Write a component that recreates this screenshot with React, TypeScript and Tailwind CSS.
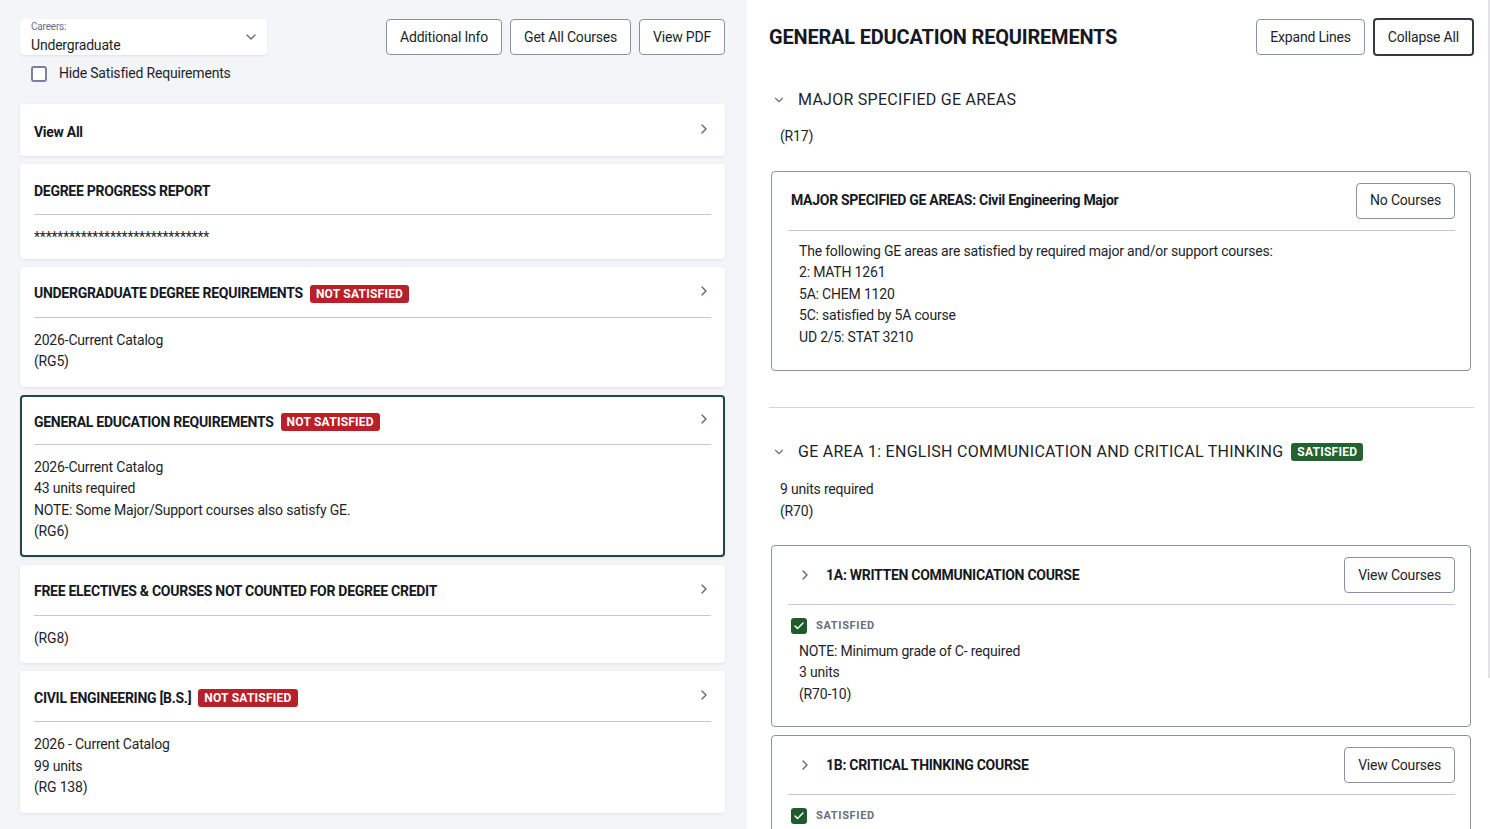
import { ChevronDown, ChevronRight, Check } from "lucide-react"
import type { ReactNode } from "react"

const FONT = { fontFamily: "Roboto, 'Noto Sans', sans-serif" }

function Badge({ tone, children }: { tone: "red" | "green"; children: ReactNode }) {
  return (
    <span
      className={`inline-flex items-center h-[18px] px-[6px] rounded-[3px] text-[12px] font-bold tracking-[0.02em] text-white uppercase ${
        tone === "red" ? "bg-[#b8202a]" : "bg-[#24622f]"
      }`}
    >
      {children}
    </span>
  )
}

function OutlineButton({ children, strong }: { children: ReactNode; strong?: boolean }) {
  return (
    <button
      className={`px-[13px] rounded-[4px] bg-white text-[14px] text-[#1d1f2b] whitespace-nowrap ${
        strong ? "border-2 border-[#2f3d3c] h-[38px] px-[12px]" : "border border-[#8a90a8] h-[36px]"
      }`}
    >
      {children}
    </button>
  )
}

interface Summary {
  title: string
  badge?: boolean
  lines?: string[]
  chevron?: boolean
  selected?: boolean
  tight?: boolean
}

const SUMMARIES: Summary[] = [
  { title: "View All", chevron: true },
  { title: "DEGREE PROGRESS REPORT", lines: ["******************************"], tight: true },
  { title: "UNDERGRADUATE DEGREE REQUIREMENTS", badge: true, chevron: true, lines: ["2026-Current Catalog", "(RG5)"] },
  {
    title: "GENERAL EDUCATION REQUIREMENTS",
    badge: true,
    chevron: true,
    selected: true,
    lines: ["2026-Current Catalog", "43 units required", "NOTE: Some Major/Support courses also satisfy GE.", "(RG6)"],
  },
  { title: "FREE ELECTIVES & COURSES NOT COUNTED FOR DEGREE CREDIT", chevron: true, lines: ["(RG8)"] },
  { title: "CIVIL ENGINEERING [B.S.]", badge: true, chevron: true, lines: ["2026 - Current Catalog", "99 units", "(RG 138)"] },
]

function SummaryCard({ item }: { item: Summary }) {
  const pad = item.selected ? "pb-[12px]" : item.tight ? "pb-[10px]" : "pb-[14px]"
  const height = item.selected ? "h-[48px]" : item.lines ? "h-[51px]" : "h-[52px]"
  return (
    <div
      className={`bg-white rounded-[4px] shadow-[0_1px_3px_rgba(60,70,110,0.10)] ${
        item.selected ? "border-2 border-[#1f4a37] px-[12px]" : "px-[14px]"
      }`}
    >
      <div className={`flex items-center pt-[4px] ${height} ${item.lines ? "border-b border-[#c4c7d6]" : ""}`}>
        <span className="text-[14px] font-bold text-[#161822] tracking-[-0.02em]">{item.title}</span>
        {item.badge && (
          <span className="ml-[7px] flex">
            <Badge tone="red">Not Satisfied</Badge>
          </span>
        )}
        {item.chevron && (
          <ChevronRight size={16} strokeWidth={2} className="ml-auto mr-[-1px] text-[#5e6483] -translate-y-[3px]" />
        )}
      </div>
      {item.lines && (
        <div className={`pt-[12px] ${pad} text-[14px] leading-[21.5px] text-[#1d1f2b]`}>
          {item.lines.map((l) => (
            <div key={l}>{l}</div>
          ))}
        </div>
      )}
    </div>
  )
}

function SatisfiedMark() {
  return (
    <div className="flex items-center gap-[9px]">
      <span className="w-[16px] h-[16px] rounded-[3px] bg-[#1f5a2d] flex items-center justify-center">
        <Check size={12} strokeWidth={3} className="text-white" />
      </span>
      <span className="text-[11px] font-bold tracking-[0.06em] text-[#6a6e7e]">SATISFIED</span>
    </div>
  )
}

function RuleCard({
  title,
  children,
  button,
  expandable,
}: {
  title: string
  children: ReactNode
  button: string
  expandable?: boolean
}) {
  return (
    <div className="ml-[2px] mr-[3px] border border-[#8a90a8] rounded-[4px] pl-4 pr-[15px]">
      <div className="flex items-center py-[11px] border-b border-[#c4c7d6]">
        {expandable && <ChevronRight size={16} strokeWidth={2} className="ml-[9px] mr-[13px] text-[#5e6483]" />}
        <span className={`text-[14px] font-bold text-[#161822] tracking-[-0.02em] ${expandable ? "" : "pl-[3px]"}`}>
          {title}
        </span>
        <span className="ml-auto">
          <OutlineButton>{button}</OutlineButton>
        </span>
      </div>
      {children}
    </div>
  )
}

function SectionHeading({ children }: { children: ReactNode }) {
  return (
    <div className="flex items-center h-[24px]">
      <ChevronDown size={14} strokeWidth={2} className="ml-[3px] mr-[12px] text-[#6a7090]" />
      {children}
    </div>
  )
}

export default function App() {
  return (
    <div
      className="relative flex h-[829px] w-[1490px] overflow-hidden bg-white text-[#1d1f2b] tracking-[-0.012em]"
      style={FONT}
    >
      {/* left: requirement summary list */}
      <div className="w-[747px] shrink-0 bg-[#f4f5f9] pl-5 pr-[22px] pt-[19px]">
        <div className="flex items-start justify-between">
          <div className="w-[247px] h-[36px] bg-white rounded-[4px] shadow-[0_1px_2px_rgba(60,70,110,0.10)] pl-[11px] pr-[8px] flex items-center">
            <div className="flex-1 leading-none">
              <div className="text-[10px] text-[#6a6e85]">Careers:</div>
              <div className="text-[14px] text-[#1d1f2b] mt-[6px]">Undergraduate</div>
            </div>
            <ChevronDown size={16} strokeWidth={2} className="text-[#6a6e7e]" />
          </div>
          <div className="flex gap-2">
            <OutlineButton>Additional Info</OutlineButton>
            <OutlineButton>Get All Courses</OutlineButton>
            <OutlineButton>View PDF</OutlineButton>
          </div>
        </div>

        <label className="flex items-center gap-[12px] mt-[8px] ml-[11px]">
          <span className="w-[16px] h-[16px] rounded-[3px] border-2 border-[#7b80a0] bg-white" />
          <span className="text-[14px] text-[#1d1f2b]">Hide Satisfied Requirements</span>
        </label>

        <div className="mt-[20px] flex flex-col gap-2">
          {SUMMARIES.map((s) => (
            <SummaryCard key={s.title} item={s} />
          ))}
        </div>
      </div>

      {/* right: selected requirement detail */}
      <div className="flex-1 pl-[22px] pr-4 pt-[18px]">
        <div className="flex items-center justify-between h-[38px]">
          <h1 className="text-[20px] font-bold text-[#161822] tracking-[-0.01em]">GENERAL EDUCATION REQUIREMENTS</h1>
          <div className="flex gap-2 items-center">
            <OutlineButton>Expand Lines</OutlineButton>
            <OutlineButton strong>Collapse All</OutlineButton>
          </div>
        </div>

        <div className="mt-[32px]">
          <SectionHeading>
            <span className="text-[16px] text-[#1d1f2b] tracking-[0.017em]">MAJOR SPECIFIED GE AREAS</span>
          </SectionHeading>
        </div>
        <div className="mt-[14px] pl-[11px] text-[14px] leading-[21.5px]">(R17)</div>

        <div className="mt-[23px]">
          <RuleCard title="MAJOR SPECIFIED GE AREAS: Civil Engineering Major" button="No Courses">
            <div className="pl-[11px] pt-[10px] pb-[22px] text-[14px] leading-[21.5px]">
              <div>The following GE areas are satisfied by required major and/or support courses:</div>
              <div>2: MATH 1261</div>
              <div>5A: CHEM 1120</div>
              <div>5C: satisfied by 5A course</div>
              <div>UD 2/5: STAT 3210</div>
            </div>
          </RuleCard>
        </div>

        <div className="mt-[36px] border-t border-[#d3d5de]" />

        <div className="mt-[32px]">
          <SectionHeading>
            <span className="text-[16px] text-[#1d1f2b] tracking-[0.017em]">
              GE AREA 1: ENGLISH COMMUNICATION AND CRITICAL THINKING
            </span>
            <span className="ml-[8px] flex">
              <Badge tone="green">Satisfied</Badge>
            </span>
          </SectionHeading>
        </div>
        <div className="mt-[15px] pl-[11px] text-[14px] leading-[21.5px]">
          <div>9 units required</div>
          <div>(R70)</div>
        </div>

        <div className="mt-[23px] flex flex-col gap-[8px]">
          <RuleCard title="1A: WRITTEN COMMUNICATION COURSE" button="View Courses" expandable>
            <div className="pl-[3px] pt-[13px] pb-[21px]">
              <SatisfiedMark />
              <div className="mt-[6px] pl-[8px] text-[14px] leading-[21.5px]">
                <div>NOTE: Minimum grade of C- required</div>
                <div>3 units</div>
                <div>(R70-10)</div>
              </div>
            </div>
          </RuleCard>
          <RuleCard title="1B: CRITICAL THINKING COURSE" button="View Courses" expandable>
            <div className="pl-[3px] pt-[13px] pb-[21px]">
              <SatisfiedMark />
              <div className="mt-[6px] pl-[8px] text-[14px] leading-[21.5px]">
                <div>NOTE: Minimum grade of C- required</div>
                <div>3 units</div>
                <div>(R70-20)</div>
              </div>
            </div>
          </RuleCard>
        </div>
      </div>

      {/* scrollbar thumb on the detail pane */}
      <div className="absolute right-0 top-0 w-[2px] h-[678px] bg-[#e3e3e6]" />
    </div>
  )
}
